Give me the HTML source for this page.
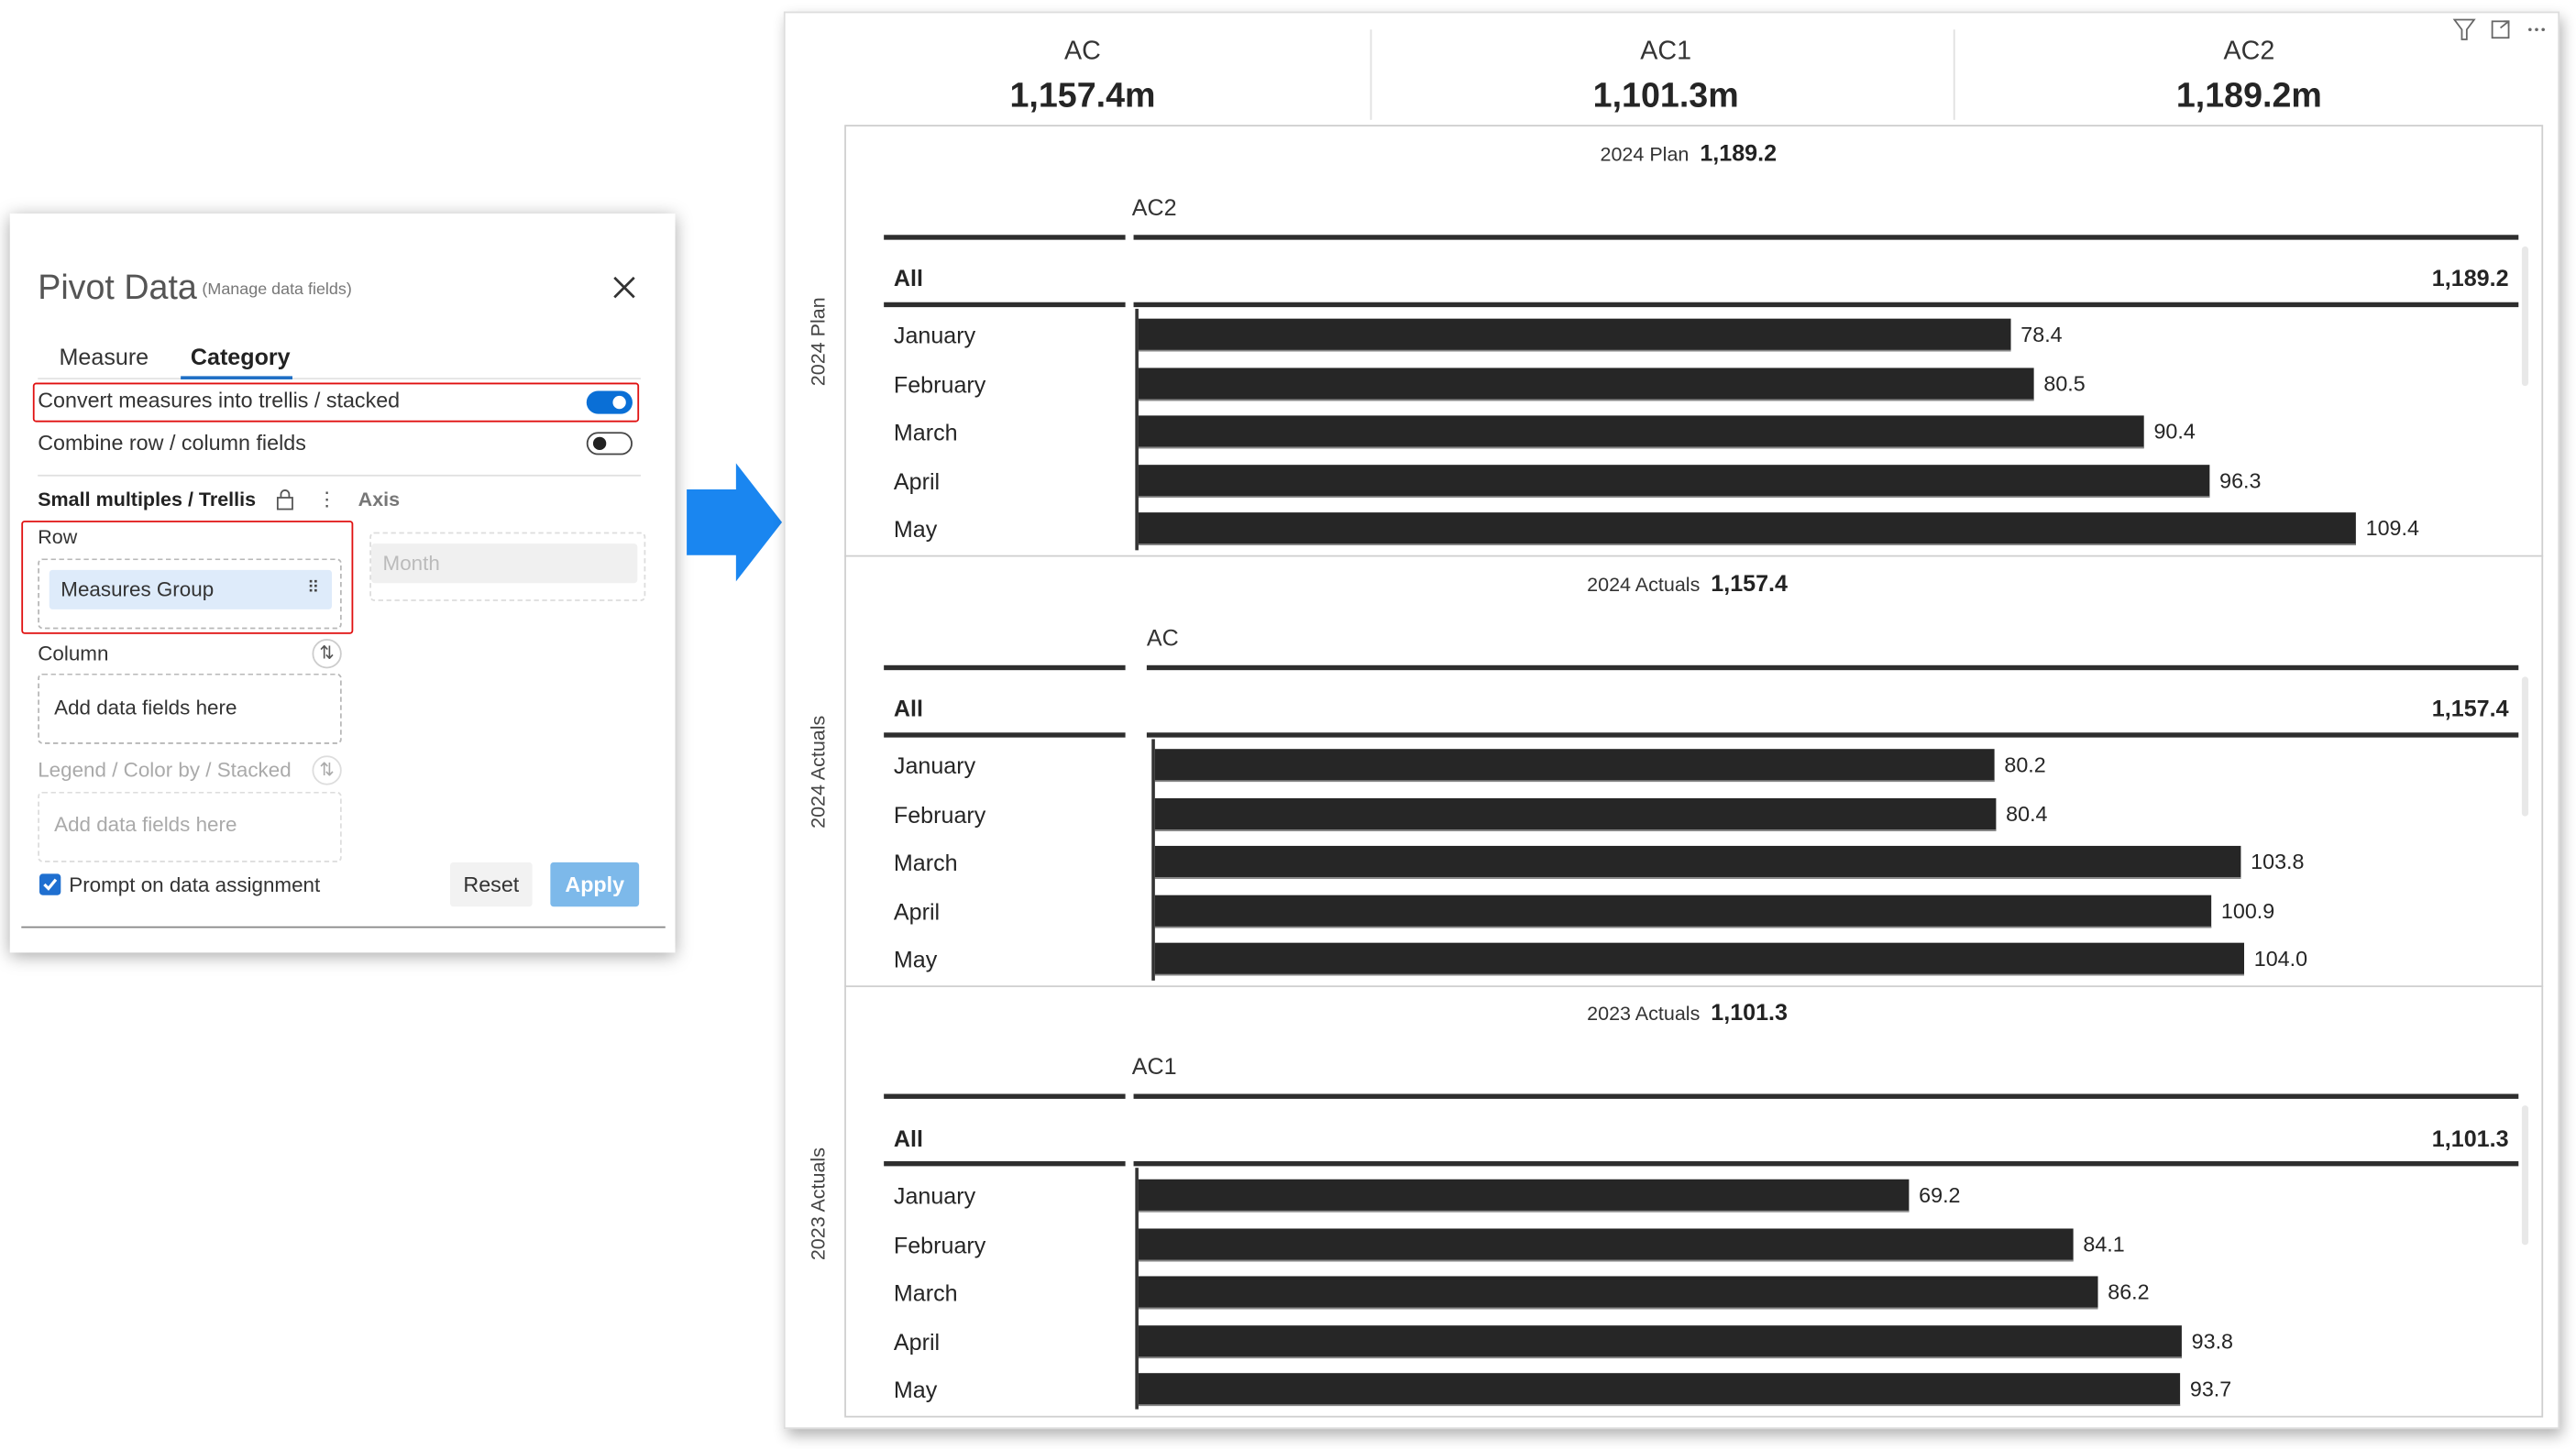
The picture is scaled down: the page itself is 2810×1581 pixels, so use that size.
<!DOCTYPE html>
<html><head><meta charset="utf-8"><style>
*{margin:0;padding:0;box-sizing:border-box}
html,body{width:2810px;height:1581px;overflow:hidden;background:#fff}
#w{position:absolute;left:0;top:0;width:1568px;height:882px;transform:scale(1.7921);transform-origin:0 0;font-family:"Liberation Sans",sans-serif;color:#252525}
.a{position:absolute}
.t{position:absolute;white-space:nowrap;line-height:20px}
.bar{position:absolute;height:20px;background:#262626;border-bottom:1px solid #888}
.hl{position:absolute;height:3px;background:#2e2e2e}
.dash{position:absolute;border:1px dashed #b8b8b8;border-radius:3px}
</style></head><body><div id="w">

<!-- left panel -->
<div class="a" style="left:6px;top:130px;width:405px;height:450px;background:#fff;box-shadow:0 2px 10px rgba(0,0,0,.35)"></div>
<div class="t" style="left:23px;top:165px;font-size:21px;line-height:22px;color:#555;font-weight:300">Pivot Data</div>
<div class="t" style="left:123px;top:167px;font-size:10px;color:#777">(Manage data fields)</div>
<svg class="a" style="left:373px;top:168px" width="14" height="14"><path d="M1 1L13 13M13 1L1 13" stroke="#333" stroke-width="1.5"/></svg>
<div class="t" style="left:36px;top:207px;font-size:14px;color:#333">Measure</div>
<div class="t" style="left:116px;top:207px;font-size:14px;font-weight:bold;color:#222">Category</div>
<div class="a" style="left:23px;top:230px;width:367px;height:1px;background:#e4e4e4"></div>
<div class="a" style="left:110px;top:229px;width:68px;height:2px;background:#1f6fc5"></div>
<div class="a" style="left:20px;top:233px;width:369px;height:24px;border:1.5px solid #e01010;border-radius:2px"></div>
<div class="t" style="left:23px;top:234px;font-size:13px;color:#333">Convert measures into trellis / stacked</div>
<div class="a" style="left:357px;top:238px;width:28px;height:14px;border-radius:7px;background:#0a6fd6"></div>
<div class="a" style="left:373px;top:241px;width:8px;height:8px;border-radius:4px;background:#fff"></div>
<div class="t" style="left:23px;top:260px;font-size:13px;color:#333">Combine row / column fields</div>
<div class="a" style="left:357px;top:263px;width:28px;height:14px;border-radius:7px;border:1px solid #444;background:#fff"></div>
<div class="a" style="left:361px;top:266px;width:8px;height:8px;border-radius:4px;background:#222"></div>
<div class="a" style="left:23px;top:289px;width:367px;height:1px;background:#e0e0e0"></div>
<div class="t" style="left:23px;top:294px;font-size:12px;font-weight:bold;color:#222">Small multiples / Trellis</div>
<svg class="a" style="left:167px;top:297px" width="13" height="14"><rect x="2" y="6" width="9" height="7" fill="none" stroke="#555"/><path d="M4 6V4a2.5 2.5 0 0 1 5 0v2" fill="none" stroke="#555"/></svg>
<div class="t" style="left:193px;top:294px;font-size:12px;color:#555">⋮</div>
<div class="t" style="left:218px;top:294px;font-size:12px;font-weight:bold;color:#777">Axis</div>
<div class="a" style="left:13px;top:317px;width:202px;height:69px;border:1.5px solid #e01010;border-radius:2px"></div>
<div class="t" style="left:23px;top:317px;font-size:12px;color:#333">Row</div>
<div class="dash" style="left:23px;top:340px;width:185px;height:43px"></div>
<div class="a" style="left:30px;top:347px;width:172px;height:24px;background:#deebfa;border-radius:2px"></div>
<div class="t" style="left:37px;top:349px;font-size:12.5px;color:#333">Measures Group</div>
<div class="t" style="left:187px;top:349px;font-size:10px;color:#444">⠿</div>
<div class="dash" style="left:225px;top:324px;width:168px;height:42px;border-color:#ddd"></div>
<div class="a" style="left:226px;top:331px;width:162px;height:24px;background:#f0f0f0;border-radius:2px"></div>
<div class="t" style="left:233px;top:333px;font-size:12.5px;color:#bbb">Month</div>
<div class="t" style="left:23px;top:388px;font-size:12.5px;color:#333">Column</div>
<div class="a" style="left:190px;top:389px;width:18px;height:18px;border:1px solid #ccc;border-radius:9px;font-size:11px;line-height:16px;text-align:center;color:#555">⇅</div>
<div class="dash" style="left:23px;top:410px;width:185px;height:43px"></div>
<div class="t" style="left:33px;top:421px;font-size:12.5px;color:#333">Add data fields here</div>
<div class="t" style="left:23px;top:459px;font-size:12.5px;color:#aaa">Legend / Color by / Stacked</div>
<div class="a" style="left:190px;top:460px;width:18px;height:18px;border:1px solid #ddd;border-radius:9px;font-size:11px;line-height:16px;text-align:center;color:#aaa">⇅</div>
<div class="dash" style="left:23px;top:482px;width:185px;height:43px;border-color:#ddd"></div>
<div class="t" style="left:33px;top:492px;font-size:12.5px;color:#aaa">Add data fields here</div>
<div class="a" style="left:24px;top:532px;width:13px;height:13px;background:#1f6fd0;border-radius:2px"></div>
<svg class="a" style="left:24px;top:532px" width="13" height="13"><path d="M3 6.5L5.5 9L10 3.5" stroke="#fff" stroke-width="1.8" fill="none"/></svg>
<div class="t" style="left:42px;top:529px;font-size:12.5px;color:#333">Prompt on data assignment</div>
<div class="a" style="left:274px;top:525px;width:50px;height:27px;background:#f2f2f2;border-radius:2px;font-size:13px;line-height:27px;text-align:center;color:#333">Reset</div>
<div class="a" style="left:335px;top:525px;width:54px;height:27px;background:#7db9ea;border-radius:2px;font-size:13px;font-weight:bold;line-height:27px;text-align:center;color:#fff">Apply</div>
<div class="a" style="left:13px;top:564px;width:392px;height:1px;background:#888"></div>

<!-- arrow -->
<svg class="a" style="left:417px;top:281px" width="62" height="75"><path d="M1 17H31V1L59 37L31 73V57H1Z" fill="#1a86f0"/></svg>

<!-- right visual -->
<div class="a" style="left:477px;top:7px;width:1081px;height:863px;background:#fff;border:1px solid #ddd;box-shadow:2px 4px 8px rgba(0,0,0,.3)"></div>
<svg class="a" style="left:1493px;top:11px" width="62" height="14"><path d="M1 1H13L8.5 7V13H5.5V7Z" fill="none" stroke="#666"/><rect x="24" y="2" width="10" height="10" fill="none" stroke="#666"/><path d="M29 6l5-4M31 2h3v3" fill="none" stroke="#666"/><circle cx="47" cy="7" r="1" fill="#666"/><circle cx="51" cy="7" r="1" fill="#666"/><circle cx="55" cy="7" r="1" fill="#666"/></svg>
<div class="t" style="left:559px;width:200px;top:22px;text-align:center;font-size:16px;color:#333">AC</div>
<div class="t" style="left:559px;width:200px;top:47px;text-align:center;font-size:21px;font-weight:bold;line-height:24px">1,157.4m</div>
<div class="t" style="left:914px;width:200px;top:22px;text-align:center;font-size:16px;color:#333">AC1</div>
<div class="t" style="left:914px;width:200px;top:47px;text-align:center;font-size:21px;font-weight:bold;line-height:24px">1,101.3m</div>
<div class="t" style="left:1269px;width:200px;top:22px;text-align:center;font-size:16px;color:#333">AC2</div>
<div class="t" style="left:1269px;width:200px;top:47px;text-align:center;font-size:21px;font-weight:bold;line-height:24px">1,189.2m</div>
<div class="a" style="left:834px;top:18px;width:1px;height:55px;background:#e0e0e0"></div>
<div class="a" style="left:1189px;top:18px;width:1px;height:55px;background:#e0e0e0"></div>
<div class="a" style="left:514px;top:76px;width:1034px;height:787px;border:1px solid #cfcfcf"></div>
<div class="a" style="left:514px;top:338px;width:1034px;height:1px;background:#cfcfcf"></div>
<div class="a" style="left:514px;top:600px;width:1034px;height:1px;background:#cfcfcf"></div>

<!-- vertical labels -->
<div class="t" style="left:448px;width:100px;top:198px;text-align:center;font-size:12px;color:#444;transform:rotate(-90deg)">2024 Plan</div>
<div class="t" style="left:448px;width:100px;top:460px;text-align:center;font-size:12px;color:#444;transform:rotate(-90deg)">2024 Actuals</div>
<div class="t" style="left:448px;width:100px;top:723px;text-align:center;font-size:12px;color:#444;transform:rotate(-90deg)">2023 Actuals</div>

<!-- panel 1 -->
<div class="t" style="left:974px;top:83px;font-size:12px;color:#333">2024 Plan&nbsp; <b style="font-size:14px;color:#222">1,189.2</b></div>
<div class="t" style="left:689px;top:116px;font-size:14px;color:#333">AC2</div>
<div class="hl" style="left:538px;top:143px;width:147px"></div><div class="hl" style="left:690px;top:143px;width:843px"></div>
<div class="t" style="left:544px;top:159px;font-size:14px;font-weight:bold">All</div>
<div class="t" style="left:1427px;width:100px;top:159px;text-align:right;font-size:14px;font-weight:bold">1,189.2</div>
<div class="hl" style="left:538px;top:184px;width:147px"></div><div class="hl" style="left:690px;top:184px;width:843px"></div>
<div class="a" style="left:691px;top:188px;width:2px;height:147px;background:#333"></div>
<div class="a" style="left:1535px;top:150px;width:4px;height:85px;background:#e8e8e8;border-radius:2px"></div>
<div class="t" style="left:544px;top:194px;font-size:14px">January</div><div class="bar" style="left:693px;top:194px;width:531px"></div><div class="t" style="left:1230px;top:194px;font-size:13px">78.4</div>
<div class="t" style="left:544px;top:224px;font-size:14px">February</div><div class="bar" style="left:693px;top:224px;width:545px"></div><div class="t" style="left:1244px;top:224px;font-size:13px">80.5</div>
<div class="t" style="left:544px;top:253px;font-size:14px">March</div><div class="bar" style="left:693px;top:253px;width:612px"></div><div class="t" style="left:1311px;top:253px;font-size:13px">90.4</div>
<div class="t" style="left:544px;top:283px;font-size:14px">April</div><div class="bar" style="left:693px;top:283px;width:652px"></div><div class="t" style="left:1351px;top:283px;font-size:13px">96.3</div>
<div class="t" style="left:544px;top:312px;font-size:14px">May</div><div class="bar" style="left:693px;top:312px;width:741px"></div><div class="t" style="left:1440px;top:312px;font-size:13px">109.4</div>

<!-- panel 2 -->
<div class="t" style="left:966px;top:345px;font-size:12px;color:#333">2024 Actuals&nbsp; <b style="font-size:14px;color:#222">1,157.4</b></div>
<div class="t" style="left:698px;top:378px;font-size:14px;color:#333">AC</div>
<div class="hl" style="left:538px;top:405px;width:147px"></div><div class="hl" style="left:698px;top:405px;width:835px"></div>
<div class="t" style="left:544px;top:421px;font-size:14px;font-weight:bold">All</div>
<div class="t" style="left:1427px;width:100px;top:421px;text-align:right;font-size:14px;font-weight:bold">1,157.4</div>
<div class="hl" style="left:538px;top:446px;width:147px"></div><div class="hl" style="left:698px;top:446px;width:835px"></div>
<div class="a" style="left:701px;top:450px;width:2px;height:147px;background:#333"></div>
<div class="a" style="left:1535px;top:412px;width:4px;height:85px;background:#e8e8e8;border-radius:2px"></div>
<div class="t" style="left:544px;top:456px;font-size:14px">January</div><div class="bar" style="left:703px;top:456px;width:511px"></div><div class="t" style="left:1220px;top:456px;font-size:13px">80.2</div>
<div class="t" style="left:544px;top:486px;font-size:14px">February</div><div class="bar" style="left:703px;top:486px;width:512px"></div><div class="t" style="left:1221px;top:486px;font-size:13px">80.4</div>
<div class="t" style="left:544px;top:515px;font-size:14px">March</div><div class="bar" style="left:703px;top:515px;width:661px"></div><div class="t" style="left:1370px;top:515px;font-size:13px">103.8</div>
<div class="t" style="left:544px;top:545px;font-size:14px">April</div><div class="bar" style="left:703px;top:545px;width:643px"></div><div class="t" style="left:1352px;top:545px;font-size:13px">100.9</div>
<div class="t" style="left:544px;top:574px;font-size:14px">May</div><div class="bar" style="left:703px;top:574px;width:663px"></div><div class="t" style="left:1372px;top:574px;font-size:13px">104.0</div>

<!-- panel 3 -->
<div class="t" style="left:966px;top:606px;font-size:12px;color:#333">2023 Actuals&nbsp; <b style="font-size:14px;color:#222">1,101.3</b></div>
<div class="t" style="left:689px;top:639px;font-size:14px;color:#333">AC1</div>
<div class="hl" style="left:538px;top:666px;width:147px"></div><div class="hl" style="left:690px;top:666px;width:843px"></div>
<div class="t" style="left:544px;top:683px;font-size:14px;font-weight:bold">All</div>
<div class="t" style="left:1427px;width:100px;top:683px;text-align:right;font-size:14px;font-weight:bold">1,101.3</div>
<div class="hl" style="left:538px;top:707px;width:147px"></div><div class="hl" style="left:690px;top:707px;width:843px"></div>
<div class="a" style="left:691px;top:711px;width:2px;height:147px;background:#333"></div>
<div class="a" style="left:1535px;top:673px;width:4px;height:85px;background:#e8e8e8;border-radius:2px"></div>
<div class="t" style="left:544px;top:718px;font-size:14px">January</div><div class="bar" style="left:693px;top:718px;width:469px"></div><div class="t" style="left:1168px;top:718px;font-size:13px">69.2</div>
<div class="t" style="left:544px;top:748px;font-size:14px">February</div><div class="bar" style="left:693px;top:748px;width:569px"></div><div class="t" style="left:1268px;top:748px;font-size:13px">84.1</div>
<div class="t" style="left:544px;top:777px;font-size:14px">March</div><div class="bar" style="left:693px;top:777px;width:584px"></div><div class="t" style="left:1283px;top:777px;font-size:13px">86.2</div>
<div class="t" style="left:544px;top:807px;font-size:14px">April</div><div class="bar" style="left:693px;top:807px;width:635px"></div><div class="t" style="left:1334px;top:807px;font-size:13px">93.8</div>
<div class="t" style="left:544px;top:836px;font-size:14px">May</div><div class="bar" style="left:693px;top:836px;width:634px"></div><div class="t" style="left:1333px;top:836px;font-size:13px">93.7</div>

</div></body></html>
